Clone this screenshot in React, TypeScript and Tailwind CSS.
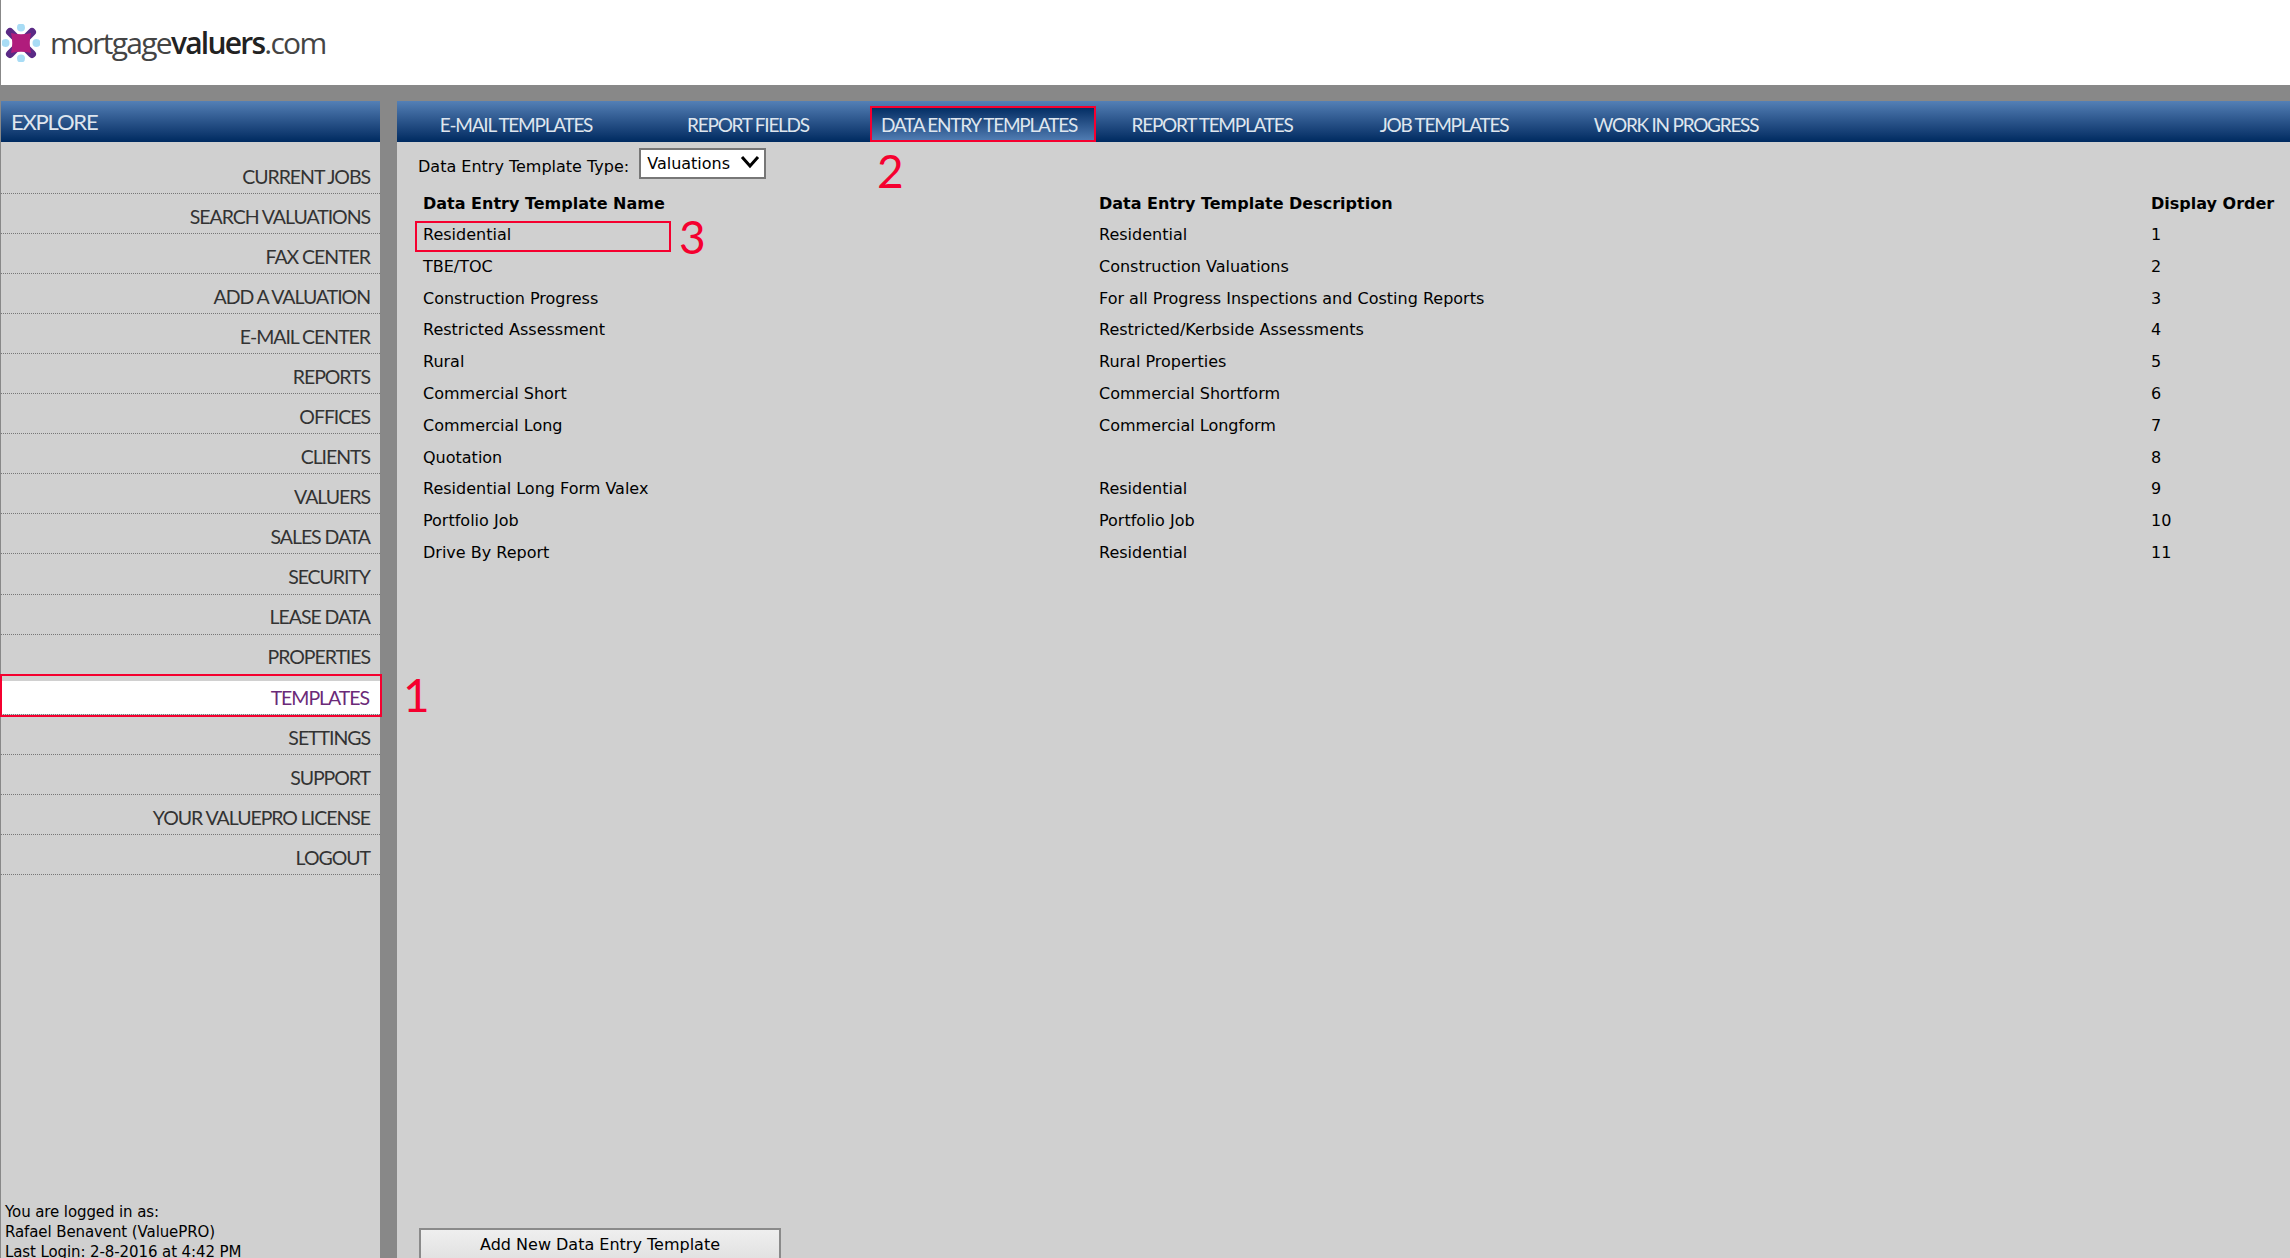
const menuItems = [
  "CURRENT JOBS",
  "SEARCH VALUATIONS",
  "FAX CENTER",
  "ADD A VALUATION",
  "E-MAIL CENTER",
  "REPORTS",
  "OFFICES",
  "CLIENTS",
  "VALUERS",
  "SALES DATA",
  "SECURITY",
  "LEASE DATA",
  "PROPERTIES",
  "TEMPLATES",
  "SETTINGS",
  "SUPPORT",
  "YOUR VALUEPRO LICENSE",
  "LOGOUT",
];

const tabs = [
  "E-MAIL TEMPLATES",
  "REPORT FIELDS",
  "DATA ENTRY TEMPLATES",
  "REPORT TEMPLATES",
  "JOB TEMPLATES",
  "WORK IN PROGRESS",
];

const templates = [
  ["Residential", "Residential", "1"],
  ["TBE/TOC", "Construction Valuations", "2"],
  ["Construction Progress", "For all Progress Inspections and Costing Reports", "3"],
  ["Restricted Assessment", "Restricted/Kerbside Assessments", "4"],
  ["Rural", "Rural Properties", "5"],
  ["Commercial Short", "Commercial Shortform", "6"],
  ["Commercial Long", "Commercial Longform", "7"],
  ["Quotation", "", "8"],
  ["Residential Long Form Valex", "Residential", "9"],
  ["Portfolio Job", "Portfolio Job", "10"],
  ["Drive By Report", "Residential", "11"],
];

function Logo() {
  return (
    <div className="flex items-center gap-[10px] pl-[1px]">
      <svg width="38" height="38" viewBox="0 0 38 38">
        <g fill="#a8dcf5">
          <circle cx="19" cy="3.5" r="4" />
          <circle cx="19" cy="34.5" r="4" />
          <circle cx="3.5" cy="19" r="4" />
          <circle cx="34.5" cy="19" r="4" />
        </g>
        <path d="M8 8L30 30M30 8L8 30" stroke="#5b2a86" strokeWidth="8" strokeLinecap="round" />
        <path d="M9 9 Q19 11.5 29 9 Q26.5 19 29 29 Q19 26.5 9 29 Q11.5 19 9 9Z" fill="#b01c7c" />
      </svg>
      <div className="font-['Open_Sans',sans-serif] text-[30px] leading-none tracking-[-1.75px] text-[#444444]">
        mortgage<span className="font-semibold text-[#222222]">valuers</span>.com
      </div>
    </div>
  );
}

export default function App() {
  return (
    <div className="relative flex h-[1258px] w-[2290px] flex-col overflow-hidden bg-[#888888] font-['DejaVu_Sans',sans-serif] text-[16px] text-black">
      <header className="flex h-[85px] items-center border-l border-[#888888] bg-white">
        <Logo />
      </header>

      <div className="mt-[16px] flex min-h-0 flex-1 gap-[17px] pl-[1px]">
        <aside className="flex w-[379px] flex-col bg-[#d0d0d0]">
          <div className="flex h-[41px] items-center bg-gradient-to-b from-[#5480b6] to-[#002a60] pl-[10px] font-['Lato',sans-serif] text-[22px] tracking-[-1.2px] text-[#dfe6ee]">
            EXPLORE
          </div>
          <nav className="mt-[12px] font-['Lato',sans-serif] text-[19.5px] tracking-[-1.05px] text-[#333333]">
            {menuItems.map((item) => {
              const active = item === "TEMPLATES";
              return (
                <div key={item} className="h-[40.06px] border-b border-dotted border-[#777777] pt-[6px]">
                  <div
                    className={
                      active
                        ? "flex h-full items-center justify-end bg-white pr-[11px] text-[#6b2a78]"
                        : "flex h-full items-center justify-end pr-[10px]"
                    }
                  >
                    {item}
                  </div>
                </div>
              );
            })}
          </nav>
          <div className="mt-auto mb-[-4px] pl-[4px] text-[15px] leading-[20px] tracking-[-0.1px]">
            <p>You are logged in as:</p>
            <p>Rafael Benavent (ValuePRO)</p>
            <p>Last Login: 2-8-2016 at 4:42 PM</p>
          </div>
        </aside>

        <main className="flex min-w-0 flex-1 flex-col bg-[#d0d0d0]">
          <div className="flex h-[41px] bg-gradient-to-b from-[#5480b6] to-[#002a60] pl-[3px] font-['Lato',sans-serif] text-[19px] tracking-[-1.25px] text-[#dfe6ee]">
            {tabs.map((tab) =>
              tab === "DATA ENTRY TEMPLATES" ? (
                <div key={tab} className="flex w-[232px] pl-[6px] pt-[5px]">
                  <div className="flex flex-1 items-center justify-center bg-gradient-to-b from-[#002a60] to-[#5480b6] pr-[8px] pt-[2px]">
                    {tab}
                  </div>
                </div>
              ) : (
                <div key={tab} className="flex w-[232px] items-center justify-center pt-[7px]">
                  {tab}
                </div>
              ),
            )}
          </div>

          <div className="flex h-[36px] items-start pl-[21px] pt-[6px]">
            <span className="mt-[7px]">Data Entry Template Type:</span>
            <div className="ml-[10px] flex h-[31px] w-[127px] items-center justify-between border-2 border-[#777777] bg-white pl-[6px] pr-[4px]">
              <span>Valuations</span>
              <svg width="20" height="20" viewBox="0 0 20 20" fill="none" stroke="black" strokeWidth="3" className="mb-[3px]">
                <path d="M2 5l8 9 8-9" />
              </svg>
            </div>
          </div>

          <div className="mt-[10px] grid grid-cols-[676px_1052px_1fr] pl-[26px]">
            <div className="h-[31px] font-bold leading-[31px]">Data Entry Template Name</div>
            <div className="h-[31px] font-bold leading-[31px]">Data Entry Template Description</div>
            <div className="h-[31px] font-bold leading-[31px]">Display Order</div>
            {templates.map(([name, description, order]) => (
              <div key={order} className="contents">
                <div className="h-[31.8px] leading-[31.8px]">{name}</div>
                <div className="h-[31.8px] leading-[31.8px]">{description}</div>
                <div className="h-[31.8px] leading-[31.8px]">{order}</div>
              </div>
            ))}
          </div>

          <button
            type="button"
            className="mt-auto mb-[-12px] ml-[22px] h-[42px] w-[362px] border-2 border-b-0 border-[#8a8a8a] bg-gradient-to-b from-[#efefef] to-[#dcdcdc] pb-[10px] text-[16px]"
          >
            Add New Data Entry Template
          </button>
        </main>
      </div>

      {/* red annotations drawn over the screenshot */}
      <div className="absolute left-0 top-[674px] h-[43px] w-[382px] border-[2px] border-[#f5002f]" />
      <div className="absolute left-[870px] top-[106px] h-[36px] w-[226px] border-[2px] border-[#f5002f]" />
      <div className="absolute left-[415px] top-[221px] h-[31px] w-[256px] border-[2px] border-[#f5002f]" />
      <span className="absolute left-[403px] top-[665px] font-['Lato',sans-serif] text-[46px] leading-[60px] text-[#f5002f]">1</span>
      <span className="absolute left-[877px] top-[141px] font-['Lato',sans-serif] text-[46px] leading-[60px] text-[#f5002f]">2</span>
      <span className="absolute left-[679px] top-[207px] font-['Lato',sans-serif] text-[46px] leading-[60px] text-[#f5002f]">3</span>
    </div>
  );
}
